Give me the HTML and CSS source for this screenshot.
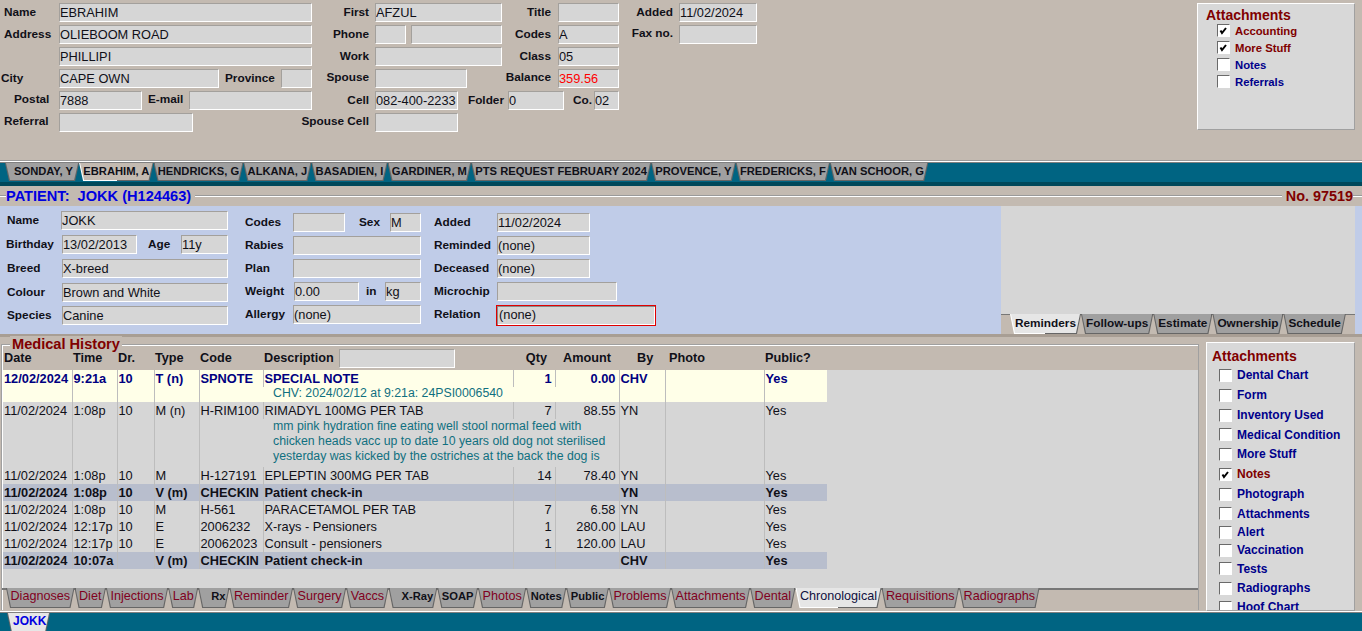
FILE: index.html
```html
<!DOCTYPE html>
<html lang="en">
<head>
    <meta charset="UTF-8">
    <meta name="viewport" content="width=device-width, initial-scale=1.0">
    <title>Patient Record</title>
    <link rel="stylesheet" href="styles.css">
</head>
<body>
    <div class="owner">
        <div class="col col-a">
            <div class="row"><div class="lbl la">Name</div><div class="fld w253">EBRAHIM</div></div>
            <div class="row"><div class="lbl la">Address</div><div class="fld w253">OLIEBOOM ROAD</div></div>
            <div class="row"><div class="lbl la"></div><div class="fld w253">PHILLIPI</div></div>
            <div class="row"><div class="lbl la la-city">City</div><div class="fld w160">CAPE OWN</div><div class="lbl lprov">Province</div><div class="fld w31"></div></div>
            <div class="row"><div class="lbl la la-postal up">Postal</div><div class="fld w83">7888</div><div class="lbl lmail">E-mail</div><div class="fld w123"></div></div>
            <div class="row"><div class="lbl la up">Referral</div><div class="fld w134"></div></div>
        </div>
        <div class="col col-b">
            <div class="row"><div class="lbl rt lb">First</div><div class="fld w127">AFZUL</div></div>
            <div class="row"><div class="lbl rt lb">Phone</div><div class="fld w31">&nbsp;</div><div class="fld w91 gap5"></div></div>
            <div class="row"><div class="lbl rt lb">Work</div><div class="fld w127"></div></div>
            <div class="row"><div class="lbl rt lb up">Spouse</div><div class="fld w92"></div></div>
            <div class="row"><div class="lbl rt lb">Cell</div><div class="fld w83">082-400-2233</div></div>
            <div class="row"><div class="lbl rt lb up">Spouse Cell</div><div class="fld w83"></div></div>
        </div>
        <div class="col col-c">
            <div class="row"><div class="lbl rt lc">Title</div><div class="fld w61"></div></div>
            <div class="row"><div class="lbl rt lc">Codes</div><div class="fld w61">A</div></div>
            <div class="row"><div class="lbl rt lc">Class</div><div class="fld w61">05</div></div>
            <div class="row"><div class="lbl rt lc up">Balance</div><div class="fld w61 red">359.56</div></div>
            <div class="row"><div class="lbl rt lfolder">Folder</div><div class="fld w56">0</div><div class="lbl lco">Co.</div><div class="fld w25">02</div></div>
        </div>
        <div class="col col-d">
            <div class="row"><div class="lbl rt ld">Added</div><div class="fld w78">11/02/2024</div></div>
            <div class="row"><div class="lbl rt ld up">Fax no.</div><div class="fld w78"></div></div>
        </div>
        <div class="attach attach-top">
            <div class="attach-title">Attachments</div>
            <div class="chk on"><span class="cb"><svg viewBox="0 0 11 11"><path d="M2.5 5.5l1.5 2.5 4-5"/></svg></span>Accounting</div>
            <div class="chk on"><span class="cb"><svg viewBox="0 0 11 11"><path d="M2.5 5.5l1.5 2.5 4-5"/></svg></span>More Stuff</div>
            <div class="chk"><span class="cb"></span>Notes</div>
            <div class="chk"><span class="cb"></span>Referrals</div>
        </div>
    </div>

    <div class="band">
        <div class="band-tabs">
            <div class="tab client first">SONDAY, Y</div>
            <div class="tab client current">EBRAHIM, A</div>
            <div class="tab client">HENDRICKS, G</div>
            <div class="tab client">ALKANA, J</div>
            <div class="tab client">BASADIEN, I</div>
            <div class="tab client">GARDINER, M</div>
            <div class="tab client">PTS REQUEST FEBRUARY 2024</div>
            <div class="tab client">PROVENCE, Y</div>
            <div class="tab client">FREDERICKS, F</div>
            <div class="tab client">VAN SCHOOR, G</div>
        </div>
    </div>

    <div class="patient-head">
        <div class="rule rule-short"></div>
        <div class="patient-name">PATIENT:&nbsp; JOKK (H124463)</div>
        <div class="rule"></div>
        <div class="patient-no">No. 97519</div>
        <div class="rule rule-end"></div>
    </div>

    <div class="pet">
        <div class="pet-col pet-col-1">
            <div class="row r24"><div class="lbl p1">Name</div><div class="fld w167">JOKK</div></div>
            <div class="row r24"><div class="lbl p1 p1-b">Birthday</div><div class="fld w75 nudge">13/02/2013</div><div class="lbl lage">Age</div><div class="fld w47">11y</div></div>
            <div class="row r24"><div class="lbl p1">Breed</div><div class="fld w166 nudge">X-breed</div></div>
            <div class="row r23"><div class="lbl p1">Colour</div><div class="fld w166 nudge">Brown and White</div></div>
            <div class="row r24"><div class="lbl p1">Species</div><div class="fld w166 nudge">Canine</div></div>
        </div>
        <div class="pet-col pet-col-2">
            <div class="row r23"><div class="lbl p2">Codes</div><div class="fld w52"></div><div class="lbl lsex">Sex</div><div class="fld w31">M</div></div>
            <div class="row r23"><div class="lbl p2">Rabies</div><div class="fld w128"></div></div>
            <div class="row r23"><div class="lbl p2">Plan</div><div class="fld w128"></div></div>
            <div class="row r23"><div class="lbl p2">Weight</div><div class="fld w65 nudge">0.00</div><div class="lbl lin">in</div><div class="fld w36">kg</div></div>
            <div class="row r23"><div class="lbl p2">Allergy</div><div class="fld w128">(none)</div></div>
        </div>
        <div class="pet-col pet-col-3">
            <div class="row r23"><div class="lbl p3">Added</div><div class="fld w93">11/02/2024</div></div>
            <div class="row r23"><div class="lbl p3">Reminded</div><div class="fld w93">(none)</div></div>
            <div class="row r23"><div class="lbl p3">Deceased</div><div class="fld w93">(none)</div></div>
            <div class="row r23"><div class="lbl p3">Microchip</div><div class="fld w120"></div></div>
            <div class="row r23"><div class="lbl p3 p3-f">Relation</div><div class="fld w160 focused">(none)</div></div>
        </div>
        <div class="pet-side">
            <div class="pet-side-body"></div>
            <div class="strip strip-pet">
                <div class="tab plain current">Reminders</div>
                <div class="tab plain">Follow-ups</div>
                <div class="tab plain">Estimate</div>
                <div class="tab plain">Ownership</div>
                <div class="tab plain">Schedule</div>
            </div>
        </div>
    </div>

    <div class="lower">
        <div class="history">
            <div class="history-title">Medical History</div>
            <div class="history-head">
                <div>Date</div><div>Time</div><div>Dr.</div><div>Type</div><div>Code</div>
                <div class="head-desc">Description<div class="fld w116 head-search"></div></div>
                <div class="num">Qty</div><div class="num">Amount</div><div class="head-by">By</div><div class="head-photo">Photo</div><div>Public?</div>
            </div>
            <div class="history-body">
                <table class="hist">
                    <colgroup>
                        <col class="c-date"><col class="c-time"><col class="c-dr"><col class="c-type"><col class="c-code"><col class="c-desc"><col class="c-qty"><col class="c-amt"><col class="c-by"><col class="c-photo"><col class="c-pub">
                    </colgroup>
                    <tr class="note-row">
                        <td rowspan="2">12/02/2024</td><td rowspan="2">9:21a</td><td rowspan="2">10</td><td rowspan="2">T (n)</td><td rowspan="2">SPNOTE</td>
                        <td>SPECIAL NOTE</td><td class="num">1</td><td class="num">0.00</td>
                        <td rowspan="2">CHV</td><td rowspan="2"></td><td rowspan="2">Yes</td>
                    </tr>
                    <tr class="note-row"><td colspan="3" class="note">CHV: 2024/02/12 at 9:21a: 24PSI0006540</td></tr>
                    <tr>
                        <td rowspan="2">11/02/2024</td><td rowspan="2">1:08p</td><td rowspan="2">10</td><td rowspan="2">M (n)</td><td rowspan="2">H-RIM100</td>
                        <td>RIMADYL 100MG PER TAB</td><td class="num">7</td><td class="num">88.55</td>
                        <td rowspan="2">YN</td><td rowspan="2"></td><td rowspan="2">Yes</td>
                    </tr>
                    <tr><td colspan="3" class="note note-long">mm pink hydration fine eating well stool normal feed with<br>chicken heads vacc up to date 10 years old dog not sterilised<br>yesterday was kicked by the ostriches at the back the dog is</td></tr>
                    <tr><td>11/02/2024</td><td>1:08p</td><td>10</td><td>M</td><td>H-127191</td><td>EPLEPTIN 300MG PER TAB</td><td class="num">14</td><td class="num">78.40</td><td>YN</td><td></td><td>Yes</td></tr>
                    <tr class="visit"><td>11/02/2024</td><td>1:08p</td><td>10</td><td>V (m)</td><td>CHECKIN</td><td>Patient check-in</td><td></td><td></td><td>YN</td><td></td><td>Yes</td></tr>
                    <tr><td>11/02/2024</td><td>1:08p</td><td>10</td><td>M</td><td>H-561</td><td>PARACETAMOL PER TAB</td><td class="num">7</td><td class="num">6.58</td><td>YN</td><td></td><td>Yes</td></tr>
                    <tr><td>11/02/2024</td><td>12:17p</td><td>10</td><td>E</td><td>2006232</td><td>X-rays - Pensioners</td><td class="num">1</td><td class="num">280.00</td><td>LAU</td><td></td><td>Yes</td></tr>
                    <tr><td>11/02/2024</td><td>12:17p</td><td>10</td><td>E</td><td>20062023</td><td>Consult - pensioners</td><td class="num">1</td><td class="num">120.00</td><td>LAU</td><td></td><td>Yes</td></tr>
                    <tr class="visit"><td>11/02/2024</td><td>10:07a</td><td></td><td>V (m)</td><td>CHECKIN</td><td>Patient check-in</td><td></td><td></td><td>CHV</td><td></td><td>Yes</td></tr>
                </table>
            </div>
            <div class="strip strip-history">
                <div class="tab maroon">Diagnoses</div>
                <div class="tab maroon">Diet</div>
                <div class="tab maroon">Injections</div>
                <div class="tab maroon">Lab</div>
                <div class="tab strong wide">Rx</div>
                <div class="tab maroon">Reminder</div>
                <div class="tab maroon">Surgery</div>
                <div class="tab maroon">Vaccs</div>
                <div class="tab strong wide">X-Ray</div>
                <div class="tab strong">SOAP</div>
                <div class="tab maroon">Photos</div>
                <div class="tab strong">Notes</div>
                <div class="tab strong">Public</div>
                <div class="tab maroon">Problems</div>
                <div class="tab maroon">Attachments</div>
                <div class="tab maroon">Dental</div>
                <div class="tab maroon current">Chronological</div>
                <div class="tab maroon">Requisitions</div>
                <div class="tab maroon">Radiographs</div>
            </div>
        </div>
        <div class="attach attach-side">
            <div class="attach-title">Attachments</div>
            <div class="chk blue h20"><span class="cb"></span>Dental Chart</div>
            <div class="chk blue h20"><span class="cb"></span>Form</div>
            <div class="chk blue h20"><span class="cb"></span>Inventory Used</div>
            <div class="chk blue h19"><span class="cb"></span>Medical Condition</div>
            <div class="chk blue h20"><span class="cb"></span>More Stuff</div>
            <div class="chk on h20"><span class="cb"><svg viewBox="0 0 11 11"><path d="M2.5 5.5l1.5 2.5 4-5"/></svg></span>Notes</div>
            <div class="chk blue h20"><span class="cb"></span>Photograph</div>
            <div class="chk blue h19"><span class="cb"></span>Attachments</div>
            <div class="chk blue h18"><span class="cb"></span>Alert</div>
            <div class="chk blue h18"><span class="cb"></span>Vaccination</div>
            <div class="chk blue h19"><span class="cb"></span>Tests</div>
            <div class="chk blue h20"><span class="cb"></span>Radiographs</div>
            <div class="chk blue h18"><span class="cb"></span>Hoof Chart</div>
        </div>
    </div>

    <div class="footer">
        <div class="tab footer-tab">JOKK</div>
    </div>
</body>
</html>
```

FILE: styles.css
```css
html, body {
    margin: 0;
    height: 631px;
    overflow: hidden;
}
body {
    font-family: "Liberation Sans", Arial, sans-serif;
    font-size: 12.8px;
    color: #101018;
    background-color: #c3bab1;
}

/* shared form bits */
.row {
    display: flex;
    align-items: flex-start;
    height: 22px;
}
.lbl {
    font-weight: bold;
    font-size: 11.8px;
    line-height: 19px;
    white-space: nowrap;
    flex: none;
}
.up {
    margin-top: -1px;
}
.rt {
    display: flex;
    justify-content: flex-end;
}
.fld {
    flex: none;
    box-sizing: border-box;
    height: 19px;
    line-height: 18px;
    background-color: #d6d6d6;
    border: 1px solid;
    border-color: #a3a09c #fff #fff #a3a09c;
    white-space: nowrap;
    overflow: hidden;
}
.red { color: #f00; }
.gap5 { margin-left: 5px; }
.nudge { margin-left: 1px; }
.w25 { width: 25px; }
.w31 { width: 31px; }
.w36 { width: 36px; }
.w47 { width: 47px; }
.w52 { width: 52px; }
.w56 { width: 56px; }
.w61 { width: 61px; }
.w65 { width: 65px; }
.w75 { width: 75px; }
.w78 { width: 78px; }
.w83 { width: 83px; }
.w91 { width: 91px; }
.w92 { width: 92px; }
.w93 { width: 93px; }
.w116 { width: 116px; }
.w120 { width: 120px; }
.w123 { width: 123px; }
.w127 { width: 127px; }
.w128 { width: 128px; }
.w134 { width: 134px; }
.w160 { width: 160px; }
.w166 { width: 166px; }
.w167 { width: 167px; }
.w253 { width: 253px; }

/* owner block */
.owner {
    display: flex;
    box-sizing: border-box;
    height: 161px;
    padding-top: 3px;
    border-bottom: 1px solid #9a9a9a;
}
.col-a { width: 312px; }
.col-b { width: 190px; }
.col-c { width: 117px; }
.col-d { width: 138px; }
.la { width: 55px; padding-left: 4px; }
.la-city { width: 58px; padding-left: 1px; }
.la-postal { width: 45px; padding-left: 14px; }
.lprov { width: 50px; margin: 0 6px; }
.lmail { width: 35px; margin: -1px 6px 0; }
.lb { width: 57px; margin-right: 6px; }
.lc { width: 49px; margin-right: 7px; }
.lfolder { width: 2px; margin-right: 4px; }
.lco { width: 18px; margin: 0 3px 0 9px; }
.ld { width: 54px; margin-right: 6px; }

/* attachment check lists */
.attach {
    box-sizing: border-box;
    background-color: #d8d8d8;
    border: 1px solid;
    border-color: #fff #a0a0a0 #a0a0a0 #fff;
    overflow: hidden;
    flex: none;
}
.attach-title {
    color: #800000;
    font-weight: bold;
    font-size: 14px;
    line-height: 16px;
}
.attach-top {
    width: 158px;
    height: 127px;
    margin-left: auto;
    margin-right: 7px;
    padding: 3px 0 0 8px;
}
.attach-top .attach-title { margin-bottom: -1px; }
.attach-side {
    width: 149px;
    height: 269px;
    margin: 5px 7px 0 7px;
    padding: 5px 0 0 5px;
}
.attach-side .attach-title { margin-bottom: 1px; }
.chk {
    display: flex;
    align-items: center;
    height: 17px;
    padding-left: 11px;
    font-weight: bold;
    font-size: 11.3px;
    color: #00008b;
}
.chk.on { color: #800000; }
.attach-side .chk {
    font-size: 12px;
    padding-left: 7px;
}
.attach-side .h18 { height: 18px; }
.attach-side .h19 { height: 19px; }
.attach-side .h20 { height: 20px; }
.cb {
    box-sizing: border-box;
    flex: none;
    width: 13px;
    height: 13px;
    margin-right: 5px;
    background-color: #fff;
    border: 1px solid;
    border-color: #6a6a6a #fff #fff #6a6a6a;
}
.cb svg {
    display: block;
    width: 11px;
    height: 11px;
    fill: none;
    stroke: #000;
    stroke-width: 2;
}

/* tabs */
.tab {
    position: relative;
    z-index: 0;
    flex: none;
    box-sizing: border-box;
    background-color: #666;
    clip-path: polygon(0 0, 100% 0, calc(100% - 4px) 100%, 4px 100%);
    white-space: nowrap;
}
.tab::before {
    content: "";
    position: absolute;
    inset: 0 1px 1px 1px;
    z-index: -1;
    background-color: #a0a0a0;
    clip-path: polygon(0 0, 100% 0, calc(100% - 4px) 100%, 4px 100%);
}
.tab.current {
    background: linear-gradient(90deg, #fff 50%, #666 50%);
}
.tab.current::before { background-color: #e6e6e6; }

.band {
    border-top: 1px solid #fff;
    border-bottom: 4px solid #00485a;
    background-color: #006482;
}
.band-tabs {
    display: flex;
    height: 20px;
    padding-left: 5px;
    border-top: 1px solid #808080;
    box-sizing: border-box;
}
.client {
    height: 18px;
    line-height: 17px;
    padding: 0 4.2px;
    font-weight: bold;
    font-size: 11.2px;
}
.client.first { padding: 0 6px 0 9px; }
.client.current::before { background-color: #c3bab1; }

.strip {
    display: flex;
    box-sizing: border-box;
    border-top: 2px solid #777;
}
.strip .tab { margin-top: -1px; }

/* patient header */
.patient-head {
    display: flex;
    align-items: center;
    height: 20px;
}
.rule {
    flex: 1;
    height: 1px;
    background-color: #9a9a9a;
    border-bottom: 1px solid #fff;
}
.rule-short {
    flex: none;
    width: 6px;
}
.rule-end {
    flex: none;
    width: 9px;
}
.patient-name {
    color: #0000e0;
    font-weight: bold;
    font-size: 14.6px;
    padding-right: 4px;
    white-space: pre;
}
.patient-no {
    color: #800000;
    font-weight: bold;
    font-size: 14.4px;
    padding-left: 4px;
}

/* patient block */
.pet {
    display: flex;
    box-sizing: border-box;
    height: 131px;
    background-color: #c0cce8;
    border-bottom: 3px solid #a89e94;
}
.pet-col-1 { width: 221px; padding-top: 5px; margin-left: 7px; margin-right: 17px; }
.pet-col-2 { width: 176px; padding-top: 7px; margin-right: 13px; }
.pet-col-3 { width: 222px; padding-top: 7px; }
.row.r24 { height: 24px; }
.row.r23 { height: 23px; }
.p1 { width: 54px; }
.p1-b { margin-left: -1px; width: 55px; }
.p2 { width: 48px; }
.p3 { width: 63px; }
.p3-f { margin-right: -1px; }
.lage { width: 22px; margin: 0 11px; }
.lsex { width: 22px; margin: 0 9px 0 14px; }
.lin { width: 10px; margin: 0 9px 0 7px; }
.focused {
    height: 21px;
    line-height: 18px;
    padding-left: 2px;
    border-color: #e00000;
    box-shadow: inset 1px 1px 0 #8a8a8a, inset -1px -1px 0 #fff;
}
.pet-side {
    display: flex;
    flex-direction: column;
    width: 354px;
    margin-left: auto;
    margin-right: 7px;
}
.pet-side-body {
    flex: 1;
    background-color: #d6d6d6;
}
.strip-pet {
    height: 20px;
    padding-left: 9px;
    background-color: #c3bab1;
    border-top-width: 1px;
}
.plain {
    height: 20px;
    line-height: 18px;
    padding: 0 5px;
    font-weight: bold;
    font-size: 11.8px;
}

/* medical history */
.lower {
    display: flex;
    height: 274px;
}
.history {
    display: flex;
    flex-direction: column;
    box-sizing: border-box;
    width: 1199px;
    height: 266px;
    margin: 7px 0 0 1px;
    border: 1px solid;
    border-width: 1px 1px 0 1px;
    border-color: #a0a0a0 #a0a0a0 transparent #a0a0a0;
    box-shadow: inset 1px 1px 0 #fff;
}
.history-title {
    align-self: flex-start;
    height: 16px;
    margin: -9px 0 0 8px;
    padding: 0 2px;
    color: #800000;
    font-weight: bold;
    font-size: 14.6px;
    line-height: 16px;
    background-color: #c3bab1;
}
.history-head {
    display: grid;
    grid-template-columns: 69px 45px 37px 45px 64px 250px 42px 64px 46px 99px 63px;
    height: 17px;
    margin: -2px 0 0 1px;
    padding-left: 1px;
    font-weight: bold;
    font-size: 12.7px;
    line-height: 17px;
}
.history-head .num { text-align: right; padding-right: 9px; }
.head-desc {
    display: flex;
    gap: 5px;
}
.head-search { margin-top: -1px; }
.head-by { padding-left: 17px; }
.head-photo { padding-left: 3px; }
.history-body {
    flex: 1;
    margin-left: 1px;
    margin-top: 3px;
    background-color: #d6d6d6;
}
.hist {
    table-layout: fixed;
    width: 824px;
    border-collapse: collapse;
}
.c-date { width: 69px; }
.c-time { width: 45px; }
.c-dr { width: 37px; }
.c-type { width: 45px; }
.c-code { width: 64px; }
.c-desc { width: 250px; }
.c-qty { width: 42px; }
.c-amt { width: 64px; }
.c-by { width: 46px; }
.c-photo { width: 99px; }
.c-pub { width: 63px; }
.hist td {
    height: 17px;
    padding: 0 1px;
    line-height: 17px;
    vertical-align: top;
    white-space: nowrap;
    border-left: 1px solid #bdbdbd;
}
.hist td:first-child { border-left: 0; }
.hist .num { text-align: right; padding-right: 3px; }
.hist .note {
    padding-left: 10px;
    color: #107080;
    font-size: 12.3px;
    font-weight: normal;
    line-height: 15px;
    border-left: 0;
}
.hist .note-long { padding-bottom: 3px; }
.note-row td {
    background-color: #ffffe8;
    color: #000080;
    font-weight: bold;
}
.hist .note-row .note {
    height: 15px;
    line-height: 13px;
}
.visit td {
    background-color: #b8becd;
    font-weight: bold;
}
.strip-history {
    height: 22px;
    padding-left: 4px;
}
.strip-history .tab { margin-top: -2px; }
.maroon, .strong {
    height: 20px;
    line-height: 16px;
    padding: 0 4.5px;
    font-size: 12.6px;
}
.maroon { color: #800020; }
.maroon.current { color: #101040; }
.strong {
    font-weight: bold;
    font-size: 11.2px;
}
.wide { padding: 0 4px 0 13px; }

/* footer */
.footer {
    box-sizing: border-box;
    height: 20px;
    padding-left: 7px;
    border-top: 1px solid #fff;
    background-color: #006482;
    box-shadow: inset 0 1px 0 #808080;
}
.footer-tab {
    height: 19px;
    width: 43px;
    padding-left: 6px;
    margin-top: 1px;
    line-height: 16px;
    font-weight: bold;
    font-size: 12px;
    color: #0000e0;
}
.footer-tab::before {
    inset: 0 1px 0 1px;
    background-color: #e6e6e6;
}
```
